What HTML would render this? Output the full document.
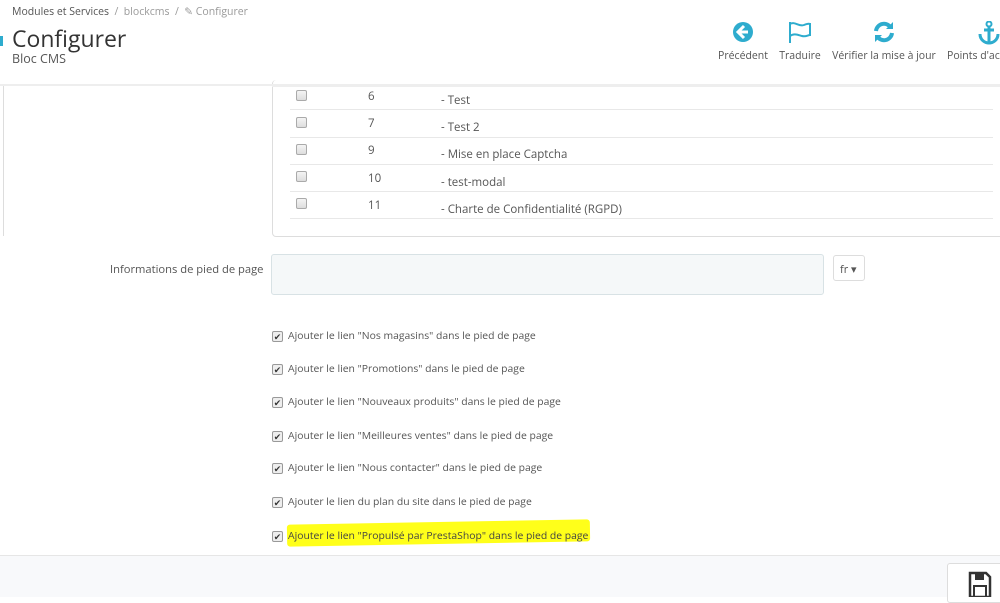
<!DOCTYPE html>
<html><head><meta charset="utf-8"><style>
*{box-sizing:border-box;margin:0;padding:0}
body{width:1000px;height:597px;overflow:hidden;background:#fff;font-family:"Open Sans","Liberation Sans",sans-serif;color:#555;position:relative;font-size:12px}
.a{position:absolute}
.bc{left:12px;top:5px;font-size:10.5px;color:#555}
.bc span{color:#999}
h1{position:absolute;left:12px;top:22px;font-size:23px;font-weight:normal;color:#333}
.sub{left:12px;top:50px;font-size:12.5px;color:#555}
.tb{top:21px;text-align:center;font-size:10.5px;color:#555}
.tb svg{display:block;margin:0 auto 6px}
.hdr{left:0;top:84px;width:1000px;height:2px;background:#eee}
.cb{width:11px;height:11px;border:1px solid #aaa;border-radius:2px;background:linear-gradient(#f4f4f4,#ddd)}
.row{left:290px;width:703px;height:1px;background:#e8e8e8}
.t{font-size:11.5px;color:#555}
.l{font-size:10.4px;left:288px}
.ck{left:272px;width:11px;height:11px;border:1px solid #999;border-radius:2px;background:#eee;font-size:9px;line-height:9px;text-align:center;color:#333}
</style></head><body>
<div class="a" style="left:0;top:36px;width:3px;height:10px;background:#2eacce"></div>
<div class="a bc">Modules et Services <span>&nbsp;/&nbsp; blockcms &nbsp;/&nbsp; ✎ Configurer</span></div>
<h1>Configurer</h1>
<div class="a sub">Bloc CMS</div>
<div class="a tb" style="left:716px;width:54px"><svg width="22" height="22"><circle cx="11" cy="11" r="10" fill="#2eacce"/><path d="M12 5 6 11l6 6M6 11h10" stroke="#fff" stroke-width="3" fill="none"/></svg>Précédent</div>
<div class="a tb" style="left:777px;width:46px"><svg width="26" height="22"><path d="M3 1v21M3 3c5-3 9 3 14 1s5-1 6-1v11c-2 0-4 2-8 1s-8-3-12 0" stroke="#2eacce" stroke-width="2" fill="none"/></svg>Traduire</div>
<div class="a tb" style="left:804px;width:160px"><svg width="24" height="22"><path d="M4 10a8 8 0 0 1 15-3M20 12a8 8 0 0 1-15 3" stroke="#2eacce" stroke-width="4" fill="none"/><path d="M14 8h7V1zM10 14H3v7z" fill="#2eacce"/></svg>Vérifier la mise à jour</div>
<div class="a tb" style="left:947px;width:80px;text-align:left"><svg width="24" height="24" style="margin:0 0 4px 30px"><circle cx="12" cy="3" r="2.5" stroke="#2eacce" stroke-width="2" fill="none"/><path d="M12 5v17M7 9h10M3 13c0 6 5 9 9 9s9-3 9-9" stroke="#2eacce" stroke-width="3" fill="none"/></svg>Points d'accès</div>
<div class="a hdr"></div>
<div class="a" style="left:3px;top:86px;width:1px;height:150px;background:#ddd"></div>
<div class="a" style="left:272px;top:80px;width:740px;height:157px;border:1px solid #ddd;border-radius:4px;border-top:none"></div>
<div class="a" style="left:272px;top:84px;width:728px;height:3px;background:#eee"></div>

<div class="a cb" style="left:296px;top:90px"></div><div class="a t" style="left:368px;top:89px">6</div><div class="a t" style="left:441px;top:93px">- Test</div><div class="a row" style="top:109px"></div>
<div class="a cb" style="left:296px;top:117px"></div><div class="a t" style="left:368px;top:116px">7</div><div class="a t" style="left:441px;top:120px">- Test 2</div><div class="a row" style="top:137px"></div>
<div class="a cb" style="left:296px;top:144px"></div><div class="a t" style="left:368px;top:143px">9</div><div class="a t" style="left:441px;top:147px">- Mise en place Captcha</div><div class="a row" style="top:164px"></div>
<div class="a cb" style="left:296px;top:171px"></div><div class="a t" style="left:368px;top:171px">10</div><div class="a t" style="left:441px;top:175px">- test-modal</div><div class="a row" style="top:191px"></div>
<div class="a cb" style="left:296px;top:198px"></div><div class="a t" style="left:368px;top:198px">11</div><div class="a t" style="left:441px;top:202px">- Charte de Confidentialité (RGPD)</div><div class="a row" style="top:218px"></div>

<div class="a t" style="left:110px;top:262px;font-size:11.2px">Informations de pied de page</div>
<div class="a" style="left:271px;top:254px;width:553px;height:41px;background:#f5f8f9;border:1px solid #d8e2e5;border-radius:3px"></div>
<div class="a" style="left:833px;top:255px;width:32px;height:26px;border:1px solid #ddd;border-radius:3px;font-size:11px;padding:6px 0 0 6px;color:#555">fr ▾</div>

<div class="a ck" style="top:331px">✔</div><div class="a t l" style="top:329px">Ajouter le lien "Nos magasins" dans le pied de page</div>
<div class="a ck" style="top:364px">✔</div><div class="a t l" style="top:362px">Ajouter le lien "Promotions" dans le pied de page</div>
<div class="a ck" style="top:397px">✔</div><div class="a t l" style="top:395px">Ajouter le lien "Nouveaux produits" dans le pied de page</div>
<div class="a ck" style="top:431px">✔</div><div class="a t l" style="top:429px">Ajouter le lien "Meilleures ventes" dans le pied de page</div>
<div class="a ck" style="top:463px">✔</div><div class="a t l" style="top:461px">Ajouter le lien "Nous contacter" dans le pied de page</div>
<div class="a ck" style="top:497px">✔</div><div class="a t l" style="top:495px">Ajouter le lien du plan du site dans le pied de page</div>
<div class="a" style="left:287px;top:522px;width:303px;height:22px;background:#ffff1a;border-radius:3px;transform:rotate(-1deg)"></div>
<div class="a ck" style="top:531px">✔</div><div class="a t l" style="top:529px;color:#444">Ajouter le lien "Propulsé par PrestaShop" dans le pied de page</div>

<div class="a" style="left:0;top:555px;width:1000px;height:42px;background:#f8f9fb;border-top:1px solid #e6e6e6"></div>
<div class="a" style="left:947px;top:563px;width:60px;height:40px;background:#fff;border:1px solid #ddd;border-radius:3px"></div>
<svg class="a" style="left:968px;top:571px" width="24" height="26"><path d="M2 2h16l4 4v20H2z" fill="none" stroke="#333" stroke-width="2.5"/><rect x="7" y="3" width="9" height="6" fill="#333"/><rect x="6" y="15" width="12" height="11" fill="none" stroke="#333" stroke-width="2"/></svg>
</body></html>
